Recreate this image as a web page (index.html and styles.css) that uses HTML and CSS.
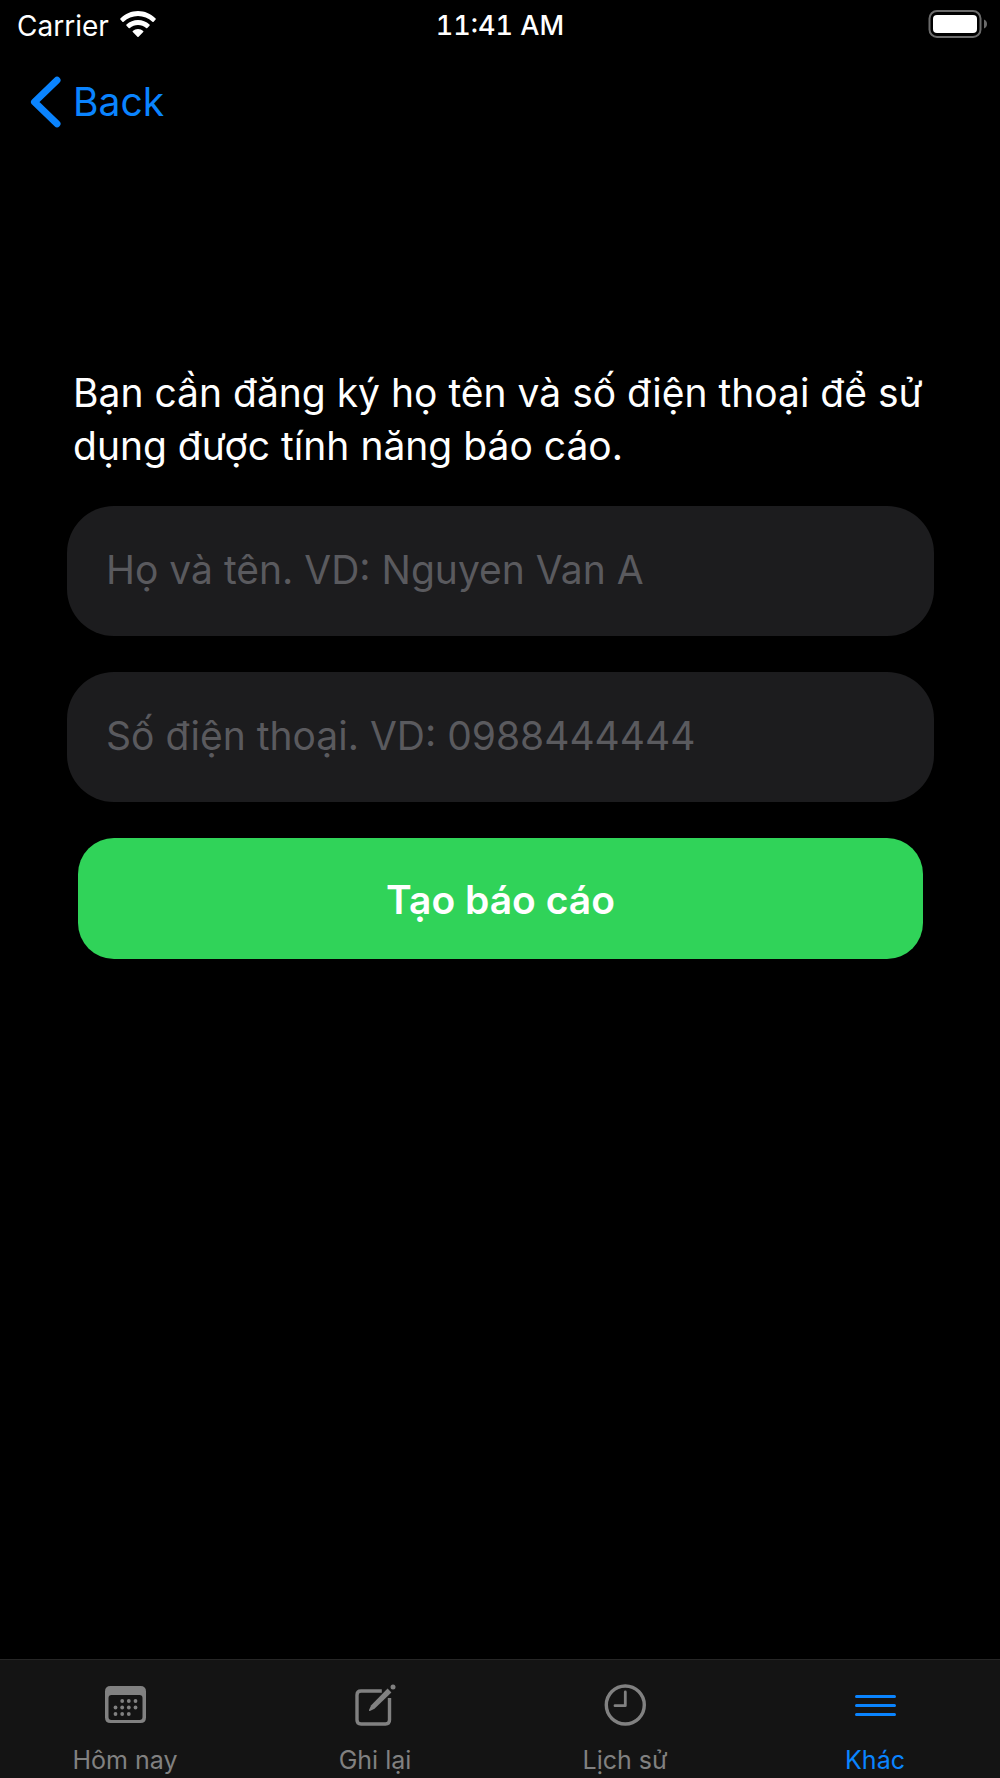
FILE: index.html
```html
<!DOCTYPE html>
<html lang="vi">
<head>
  <meta charset="utf-8">
  <meta name="viewport" content="width=device-width, initial-scale=1">
  <title>Tạo báo cáo</title>
  <link rel="stylesheet" href="styles.css">
</head>
<body>
  <div class="status-bar">
    <div class="status-carrier">
      <span>Carrier</span>
      <svg class="wifi-icon" width="36" height="28" viewBox="0 0 36 28" fill="#fff" aria-hidden="true">
        <path d="M0.4 8.4C5.3 3.6 11.4 0.9 18 0.9s12.700 2.700 17.600 7.500q.5.600 0 1.200l-2 2.100q-.6.600-1.200 0C28.400 8 23.400 5.900 18 5.900S7.600 8 3.600 11.700q-.6.600-1.200 0l-2-2.100q-.5-.6 0-1.200z"/>
        <path d="M6.500 14.600C9.700 11.600 13.700 10 18 10s8.300 1.600 11.500 4.600q.6.600 0 1.200l-2.200 2.200q-.6.500-1.200 0C23.900 16 21 14.900 18 14.900S12.100 16 9.900 18q-.6.500-1.200 0l-2.200-2.200q-.6-.6 0-1.200z"/>
        <path d="M12.800 20.900C14.200 19.600 16 18.900 18 18.900s3.800.7 5.200 2q.6.600 0 1.200l-4.600 4.700q-.6.600-1.200 0l-4.600-4.700q-.6-.6 0-1.200z"/>
      </svg>
    </div>
    <span class="status-time">11:41 AM</span>
    <svg class="battery-icon" width="60" height="30" viewBox="0 0 60 30" aria-hidden="true">
      <rect x="1.500" y="2" width="51" height="26" rx="7.500" fill="none" stroke="#6b6b6b" stroke-width="2"/>
      <rect x="5" y="6" width="44" height="18" rx="4" fill="#fff"/>
      <path d="M56 10.500c4 1.200 4 7.800 0 9z" fill="#6b6b6b"/>
    </svg>
  </div>

  <nav class="nav-bar">
    <a class="back-link" href="#">
      <svg width="31" height="52" viewBox="0 0 31 52" fill="none" stroke="currentColor" stroke-width="7" stroke-linecap="round" stroke-linejoin="round" aria-hidden="true">
        <path d="M27 4.300L4.500 26 27 47.700"/>
      </svg>
      <span>Back</span>
    </a>
  </nav>

  <main class="content">
    <form class="register-form">
      <p class="message">Bạn cần đăng ký họ tên và số điện thoại để sử dụng được tính năng báo cáo.</p>
      <input class="field" type="text" name="name" aria-label="Họ và tên" placeholder="Họ và tên. VD: Nguyen Van A">
      <input class="field" type="tel" name="phone" aria-label="Số điện thoại" placeholder="Số điện thoại. VD: 0988444444">
      <button class="submit" type="button">Tạo báo cáo</button>
    </form>
  </main>

  <nav class="tab-bar">
    <a class="tab" href="#">
      <svg width="44" height="44" viewBox="0 0 44 44" aria-hidden="true">
        <path fill="currentColor" fill-rule="evenodd" d="M7.500 3h30q5.500 0 5.500 5.500v26q0 5.500-5.500 5.500h-30q-5.500 0-5.500-5.500v-26q0-5.500 5.500-5.500zM8.500 12q-3 0-3 3v19q0 3 3 3h28q3 0 3-3v-19q0-3-3-3z"/>
        <g fill="currentColor">
          <circle cx="19.200" cy="18" r="1.900"/><circle cx="25.800" cy="18" r="1.900"/><circle cx="32.500" cy="18" r="1.900"/>
          <circle cx="12.500" cy="24.500" r="1.900"/><circle cx="19.200" cy="24.500" r="1.900"/><circle cx="25.800" cy="24.500" r="1.900"/><circle cx="32.500" cy="24.500" r="1.900"/>
          <circle cx="12.500" cy="31" r="1.900"/><circle cx="19.200" cy="31" r="1.900"/><circle cx="25.800" cy="31" r="1.900"/>
        </g>
      </svg>
      <span>Hôm nay</span>
    </a>
    <a class="tab" href="#">
      <svg width="44" height="44" viewBox="0 0 44 44" aria-hidden="true">
        <path fill="none" stroke="currentColor" stroke-width="3.400" d="M28.800 8H8q-4 0-4 4v25q0 4 4 4h24.500q4 0 4-4V15"/>
        <path fill="currentColor" d="M34.600 5.600l3.800 3.800L21.500 25.800l-4.600 2.200q-1.200.3-.9-.9l2.200-4.900z"/>
        <circle cx="40" cy="4" r="2.500" fill="currentColor"/>
      </svg>
      <span>Ghi lại</span>
    </a>
    <a class="tab" href="#">
      <svg width="44" height="44" viewBox="0 0 44 44" fill="none" stroke="currentColor" stroke-linecap="round" stroke-linejoin="round" aria-hidden="true">
        <circle cx="22.300" cy="22" r="19" stroke-width="3.400"/>
        <path stroke-width="2.800" d="M22.300 9V22.700H12"/>
      </svg>
      <span>Lịch sử</span>
    </a>
    <a class="tab tab-active" href="#" aria-current="page">
      <svg width="44" height="44" viewBox="0 0 44 44" fill="none" stroke="currentColor" stroke-width="3" stroke-linecap="round" aria-hidden="true">
        <path d="M3.500 13.500H41.500M3.500 22.500H41.500M3.500 31.500H41.500"/>
      </svg>
      <span>Khác</span>
    </a>
  </nav>
</body>
</html>
```

FILE: styles.css
```css
* {
  box-sizing: border-box;
}

body {
  margin: 0;
  min-height: 100vh;
  display: flex;
  flex-direction: column;
  background: #000;
  color: #fff;
  font-family: Inter, "Noto Sans", sans-serif;
  font-size: 39px;
  line-height: 53px;
}

a {
  color: inherit;
  text-decoration: none;
}

svg {
  display: block;
  flex: none;
}

.status-bar {
  display: grid;
  grid-template-columns: 1fr auto 1fr;
  align-items: center;
  padding: 0 12px;
  font-size: 28px;
  line-height: 52px;
}

.status-carrier {
  display: flex;
  align-items: center;
  gap: 11px;
  padding-left: 5px;
}

.wifi-icon,
.battery-icon {
  margin-bottom: 4px;
}

.status-time {
  font-size: 27px;
  font-weight: 500;
  font-variant-numeric: tabular-nums;
}

.battery-icon {
  justify-self: end;
}

.nav-bar {
  display: flex;
  padding: 24px 30px 26px;
}

.back-link {
  display: flex;
  align-items: center;
  gap: 12px;
  height: 52px;
  color: #0a84ff;
  line-height: 51px;
}

.back-link span {
  padding-bottom: 2px;
}

.content {
  flex: 1;
  padding: 212px 66px 60px 67px;
}

.register-form {
  display: flex;
  flex-direction: column;
}

.message {
  margin: 0 0 34px;
  padding: 0 6px;
}

.field {
  width: 100%;
  height: 130px;
  margin: 0 0 36px;
  padding: 0 39px 3px;
  border: 0;
  border-radius: 47px;
  background: #1c1c1e;
  color: #fff;
  font: inherit;
}

.field::placeholder {
  color: #5a5a5e;
  opacity: 1;
}

.submit {
  height: 121px;
  margin: 0 11px;
  padding: 2px 0 0;
  border: 0;
  border-radius: 36px;
  background: #30d359;
  color: #fff;
  font: inherit;
  font-weight: 600;
}

.tab-bar {
  display: grid;
  grid-template-columns: repeat(4, 1fr);
  border-top: 1px solid #262626;
  background: #141414;
}

.tab {
  display: flex;
  flex-direction: column;
  align-items: center;
  gap: 17px;
  padding: 23px 0 2px;
  color: #818181;
  font-size: 25px;
  line-height: 32px;
}

.tab-active {
  color: #0a84ff;
}
```
